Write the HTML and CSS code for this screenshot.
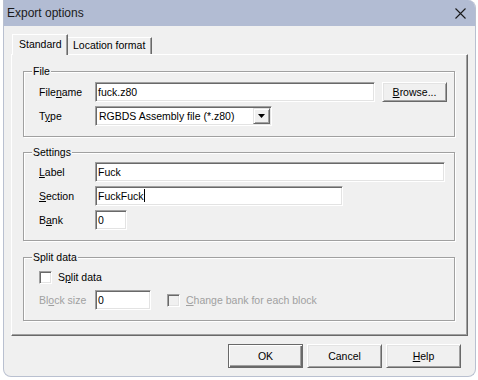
FILE: index.html
```html
<!DOCTYPE html>
<html lang="en">
<head>
    <meta charset="UTF-8">
    <meta name="viewport" content="width=device-width, initial-scale=1.0">
    <title>Export options</title>
    <link rel="stylesheet" href="styles.css">
</head>
<body>

<div class="window">
    <div class="titlebar">
        <span class="title">Export options</span>
        <svg class="close" width="11" height="11" viewBox="0 0 11 11">
            <path d="M0.5 0.5 L10.5 10.5 M10.5 0.5 L0.5 10.5" stroke="#1a1a1a" stroke-width="1.1" fill="none"/>
        </svg>
    </div>

    <div class="client">
        <div class="tabs">
            <div class="tab active">Standard</div>
            <div class="tab">Location format</div>
        </div>

        <div class="panel">
            <div class="group group-file">
                <span class="legend">File</span>
                <div class="row">
                    <span class="lbl">File<u>n</u>ame</span>
                    <div class="field w-file">fuck.z80</div>
                    <div class="btn browse"><u>B</u>rowse...</div>
                </div>
                <div class="row">
                    <span class="lbl">T<u>y</u>pe</span>
                    <div class="field select">
                        <span class="select-text">RGBDS Assembly file (*.z80)</span>
                        <span class="drop">
                            <svg width="7" height="4" viewBox="0 0 7 4"><path d="M0 0 H7 L3.5 4 Z" fill="#000"/></svg>
                        </span>
                    </div>
                </div>
            </div>

            <div class="group group-settings">
                <span class="legend">Settings</span>
                <div class="row">
                    <span class="lbl"><u>L</u>abel</span>
                    <div class="field w-label">Fuck</div>
                </div>
                <div class="row">
                    <span class="lbl"><u>S</u>ection</span>
                    <div class="field w-section">FuckFuck<span class="caret"></span></div>
                </div>
                <div class="row">
                    <span class="lbl">B<u>a</u>nk</span>
                    <div class="field w-bank">0</div>
                </div>
            </div>

            <div class="group group-split">
                <span class="legend">Split data</span>
                <div class="row check-row">
                    <span class="checkbox"></span>
                    <span class="check-text">S<u>p</u>lit data</span>
                </div>
                <div class="row">
                    <span class="lbl disabled">Bl<u>o</u>ck size</span>
                    <div class="field w-block">0</div>
                    <span class="checkbox off"></span>
                    <span class="check-text disabled"><u>C</u>hange bank for each block</span>
                </div>
            </div>
        </div>

        <div class="buttons">
            <div class="btn default">OK</div>
            <div class="btn">Cancel</div>
            <div class="btn"><u>H</u>elp</div>
        </div>
    </div>
</div>

</body>
</html>
```

FILE: styles.css
```css
* {
    box-sizing: border-box;
}

body {
    margin: 0;
    background: #fff;
    font-family: 'Liberation Sans', Arial, sans-serif;
    font-size: 10.5px;
    color: #000;
}

.window {
    margin-left: 3px;
    width: 473px;
    height: 377px;
    border: 1px solid #b9c0d0;
    border-top: none;
    border-radius: 0 8px 8px 8px;
    background: #f0f0f0;
    overflow: hidden;
    display: flex;
    flex-direction: column;
}

.titlebar {
    height: 26px;
    background: #b2bcd3;
    display: flex;
    align-items: center;
    justify-content: space-between;
    padding: 0 9px 0 3px;
}

.title {
    font-size: 12px;
    color: #1a1a1a;
}

.client {
    padding: 8px 7px 0 7px;
}

/* tabs */
.tabs {
    display: flex;
    align-items: flex-end;
    height: 20px;
    padding-left: 1px;
}

.tab {
    height: 17px;
    line-height: 15px;
    padding: 0 0 0 5px;
    width: 84px;
    white-space: nowrap;
    border: 1px solid #fff;
    border-left: none;
    border-right-color: #696969;
    border-bottom: none;
    box-shadow: inset -1px 0 #a0a0a0;
    background: #f0f0f0;
}

.tab.active {
    height: 21px;
    width: 56px;
    line-height: 18px;
    padding-left: 6px;
    border-left: 1px solid #fff;
    margin-bottom: -1px;
    position: relative;
    z-index: 1;
}

.panel {
    height: 282px;
    border: 1px solid #fff;
    border-right-color: #696969;
    border-bottom-color: #696969;
    box-shadow: inset -1px -1px #a0a0a0;
    padding: 16px 12px 0 11px;
}

/* group boxes */
.group {
    position: relative;
    border: 1px solid #a0a0a0;
    box-shadow: 1px 1px 0 #fff, inset 1px 1px 0 #fff;
    padding-left: 15px;
    display: flex;
    flex-direction: column;
    gap: 4px;
}

.legend {
    position: absolute;
    top: -7px;
    left: 8px;
    line-height: 12px;
    padding: 0 1px;
    background: #f0f0f0;
}

.group-file {
    height: 66px;
    padding-top: 10px;
}

.group-settings {
    height: 89px;
    margin-top: 15px;
    padding-top: 9px;
}

.group-split {
    height: 64px;
    margin-top: 16px;
    padding-top: 11px;
    gap: 5px;
}

.row {
    display: flex;
    align-items: center;
    height: 20px;
}

.lbl {
    width: 56px;
}

.disabled {
    color: #a0a0a0;
}

/* edit fields */
.field {
    height: 20px;
    line-height: 18px;
    padding-left: 2px;
    background: #fff;
    border: 1px solid;
    border-color: #a0a0a0 #fff #fff #a0a0a0;
    box-shadow: inset 1px 1px #696969, inset -1px -1px #e3e3e3;
    white-space: nowrap;
}

.w-file { width: 280px; }
.w-label { width: 350px; }
.w-section { width: 248px; }
.w-bank { width: 32px; }
.w-block { width: 56px; }

.caret {
    display: inline-block;
    width: 1px;
    height: 13px;
    background: #000;
    vertical-align: -2px;
}

.select {
    width: 177px;
    display: flex;
    align-items: center;
    justify-content: space-between;
    padding: 1px 1px 1px 3px;
}

.drop {
    width: 17px;
    height: 16px;
    display: flex;
    align-items: center;
    justify-content: center;
    background: #f0f0f0;
    border: 1px solid;
    border-color: #e3e3e3 #696969 #696969 #e3e3e3;
    box-shadow: inset 1px 1px #fff, inset -1px -1px #a0a0a0;
}

/* checkboxes */
.check-row {
    height: 16px;
    gap: 6px;
}

.checkbox {
    width: 13px;
    height: 13px;
    background: #fff;
    border: 1px solid;
    border-color: #a0a0a0 #fff #fff #a0a0a0;
    box-shadow: inset 1px 1px #696969, inset -1px -1px #e3e3e3;
}

.checkbox.off {
    background: #f0f0f0;
    margin-left: 16px;
    margin-right: 6px;
}

/* buttons */
.btn {
    width: 75px;
    height: 24px;
    display: flex;
    align-items: center;
    justify-content: center;
    background: #f0f0f0;
    border: 1px solid;
    border-color: #fff #696969 #696969 #fff;
    box-shadow: inset 1px 1px #e3e3e3, inset -1px -1px #a0a0a0;
}

.browse {
    width: 65px;
    height: 20px;
    margin-left: 7px;
}

.btn.default {
    border-color: #696969;
    box-shadow: inset 1px 1px #fff, inset -1px -1px #696969, inset -2px -2px #a0a0a0;
}

.buttons {
    display: flex;
    justify-content: flex-end;
    gap: 4px;
    margin-top: 8px;
    padding-right: 7px;
}
```
